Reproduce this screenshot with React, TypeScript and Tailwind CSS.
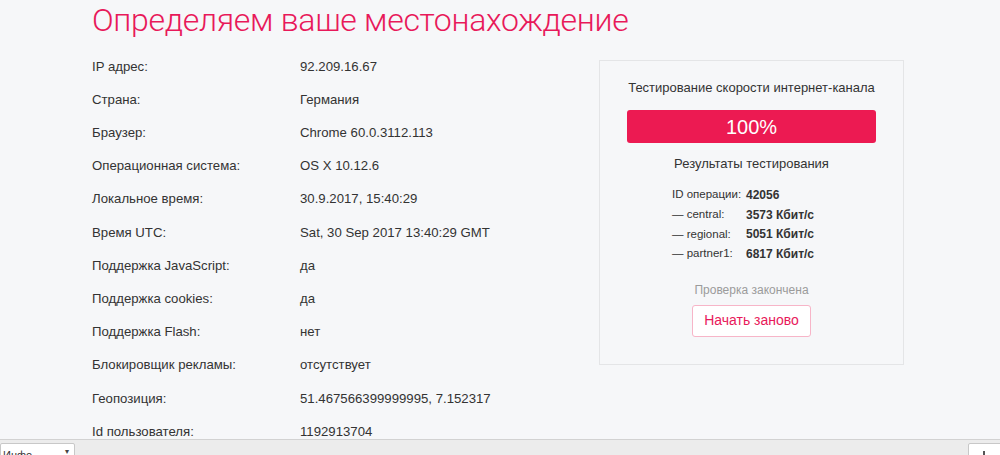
import React from "react";

const rows: [string, string][] = [
  ["IP адрес:", "92.209.16.67"],
  ["Страна:", "Германия"],
  ["Браузер:", "Chrome 60.0.3112.113"],
  ["Операционная система:", "OS X 10.12.6"],
  ["Локальное время:", "30.9.2017, 15:40:29"],
  ["Время UTC:", "Sat, 30 Sep 2017 13:40:29 GMT"],
  ["Поддержка JavaScript:", "да"],
  ["Поддержка cookies:", "да"],
  ["Поддержка Flash:", "нет"],
  ["Блокировщик рекламы:", "отсутствует"],
  ["Геопозиция:", "51.467566399999995, 7.152317"],
  ["Id пользователя:", "1192913704"],
];

const results: [string, string][] = [
  ["ID операции:", "42056"],
  ["— central:", "3573 Кбит/с"],
  ["— regional:", "5051 Кбит/с"],
  ["— partner1:", "6817 Кбит/с"],
];

export default function App() {
  return (
    <div className="h-[455px] w-[1000px] overflow-hidden bg-[#f6f7f9] flex flex-col font-['Liberation_Sans',Arial,sans-serif] text-[#333]">
      <div className="flex-1 overflow-hidden pl-[92px]">
        <h1 className="font-['Roboto',sans-serif] font-light text-[32px] tracking-[-0.3px] leading-[40px] text-[#e8195a] whitespace-nowrap">
          Определяем ваше местонахождение
        </h1>
        <div className="flex mt-[10px]">
          <div className="w-[507px]">
            {rows.map(([k, v]) => (
              <div key={k} className="h-[33.2px] flex items-center text-[13.2px]">
                <div className="w-[208px]">{k}</div>
                <div>{v}</div>
              </div>
            ))}
          </div>
          <div className="mt-[10px] w-[305px] h-[305px] border border-[#e4e5e7] bg-[#f6f7f9] self-start">
            <div className="pt-[17px] text-center text-[13px] leading-[20px]">
              Тестирование скорости интернет-канала
            </div>
            <div className="mt-[12px] mx-[27px] h-[33px] rounded-[3px] bg-[#ec1a52] flex items-center justify-center text-white text-[20px]">
              100%
            </div>
            <div className="mt-[11px] text-center text-[13px] leading-[20px]">
              Результаты тестирования
            </div>
            <div className="mt-[11px] pl-[72px] text-[12px]">
              {results.map(([k, v]) => (
                <div key={k} className="flex h-[19.7px] items-center">
                  <div className="w-[74px] text-[11.5px]">{k}</div>
                  <div className="font-bold">{v}</div>
                </div>
              ))}
            </div>
            <div className="mt-[16px] text-center text-[12px] leading-[20px] text-[#9b9b9b]">
              Проверка закончена
            </div>
            <div className="mt-[5px] flex justify-center">
              <button className="w-[119px] h-[32px] rounded-[3px] border border-[#f7b5c8] bg-white text-[#e8195a] text-[14px]">
                Начать заново
              </button>
            </div>
          </div>
        </div>
      </div>
      <div className="relative h-[16px] border-t border-[#d2d2d2] bg-[#ececec] overflow-hidden">
        <div className="absolute left-0 top-[3px] w-[75px] h-[20px] bg-white border border-[#c8c8c8] rounded-[2px]">
          <div className="absolute left-[2px] top-[4px] w-[58px] overflow-hidden whitespace-nowrap text-[11px] leading-[14px] text-[#333]">
            Инфо
          </div>
          <span className="absolute right-[5px] top-[3px] text-[8px] leading-[10px] text-[#444]">▾</span>
        </div>
        <div className="absolute left-[968px] top-[3px] w-[40px] h-[20px] bg-white border border-[#c8c8c8] rounded-[2px]">
          <span className="absolute left-[14px] top-[7px] w-[2px] h-[8px] bg-[#555]" />
        </div>
      </div>
    </div>
  );
}
